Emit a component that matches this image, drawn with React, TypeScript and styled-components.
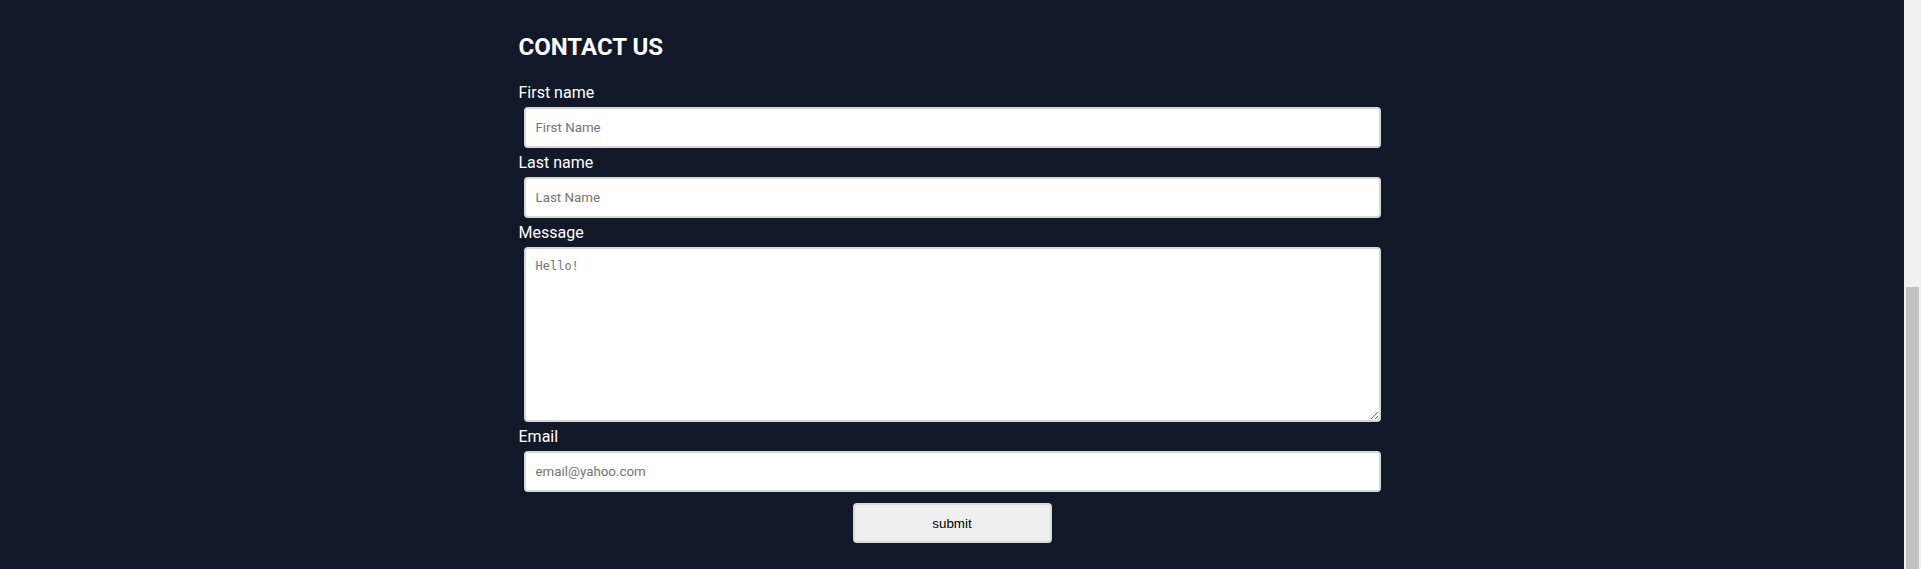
import styled, { createGlobalStyle } from "styled-components";
import { useLayoutEffect, useRef, Fragment } from "react";

const GlobalStyle = createGlobalStyle`
	html, body {
		margin: 0;
		height: 100%;
		overflow: hidden;
	}
	body {
		background: #111827;
		font-family: Roboto, "Liberation Sans", sans-serif;
		color: #ffffff;
	}
	#root {
		height: 100%;
	}
`;

const Window = styled.div`
	height: 100%;
	display: flex;
`;

const Viewport = styled.div`
	flex: 1;
	height: 100%;
	overflow-y: scroll;
	scrollbar-width: none;

	&::-webkit-scrollbar {
		display: none;
	}
`;

// window scrollbar, scrolled to the bottom of the page
const ScrollTrack = styled.div`
	width: 17px;
	height: 100%;
	background: #f1f1f1;
	display: flex;
	flex-direction: column;
	justify-content: flex-end;
	align-items: center;
`;

const ScrollThumb = styled.div`
	width: 13px;
	height: 282px;
	background: #c1c1c1;
`;

// the part of the page above the form, scrolled out of view
const Above = styled.section`
	height: 579px;
`;

const ContactSection = styled.section`
	height: 569px;
	box-sizing: border-box;
	padding-top: 33px;
`;

const FormContainer = styled.form`
	width: 867px;
	margin: 0 auto;
	display: flex;
	flex-direction: column;

	h2 {
		margin: 0 0 22px;
		font-size: 24px;
		line-height: 28px;
		font-weight: 700;
	}
`;

const Label = styled.label`
	font-size: 16px;
	line-height: 19px;
	color: #ffffff;
`;

const fieldBase = `
	box-sizing: border-box;
	margin: 5px;
	width: calc(100% - 10px);
	background: #ffffff;
	border: 2px solid #d8d8d4;
	border-radius: 4px;
	outline: none;
	color: #111827;
`;

const TextInput = styled.input`
	${fieldBase}
	height: 41px;
	padding: 0 10px;
	font-family: Roboto, "Liberation Sans", sans-serif;
	font-size: 13.33px;

	&::placeholder {
		color: #757575;
	}
`;

const MessageArea = styled.textarea`
	${fieldBase}
	height: 175px;
	padding: 10px;
	font-family: "DejaVu Sans Mono", "Liberation Mono", monospace;
	font-size: 12px;
	resize: vertical;

	&::placeholder {
		color: #757575;
	}
`;

const ButtonRow = styled.div`
	display: flex;
	justify-content: center;
	margin-top: 6px;
`;

const SubmitButton = styled.button`
	width: 199px;
	height: 40px;
	background: #efefef;
	border: 2px solid #d8d8d4;
	border-radius: 4px;
	font-family: "Liberation Sans", Arial, sans-serif;
	font-size: 13.33px;
	color: #000000;
	cursor: pointer;
`;

const fields = [
	{ id: "firstName", label: "First name", placeholder: "First Name" },
	{ id: "lastName", label: "Last name", placeholder: "Last Name" },
];

export default function App() {
	const viewportRef = useRef<HTMLDivElement>(null);

	useLayoutEffect(() => {
		const el = viewportRef.current;
		if (el) el.scrollTop = el.scrollHeight;
	}, []);

	return (
		<>
			<GlobalStyle />
			<Window>
				<Viewport ref={viewportRef}>
					<Above />
					<ContactSection>
						<FormContainer onSubmit={(event) => event.preventDefault()}>
							<h2>CONTACT US</h2>
							{fields.map((field) => (
								<Fragment key={field.id}>
									<Label htmlFor={field.id}>{field.label}</Label>
									<TextInput id={field.id} name={field.id} type='text' placeholder={field.placeholder} />
								</Fragment>
							))}
							<Label htmlFor='message'>Message</Label>
							<MessageArea id='message' name='message' placeholder='Hello!' />
							<Label htmlFor='email'>Email</Label>
							<TextInput id='email' name='email' type='email' placeholder='email@yahoo.com' />
							<ButtonRow>
								<SubmitButton type='submit'>submit</SubmitButton>
							</ButtonRow>
						</FormContainer>
					</ContactSection>
				</Viewport>
				<ScrollTrack>
					<ScrollThumb />
				</ScrollTrack>
			</Window>
		</>
	);
}
